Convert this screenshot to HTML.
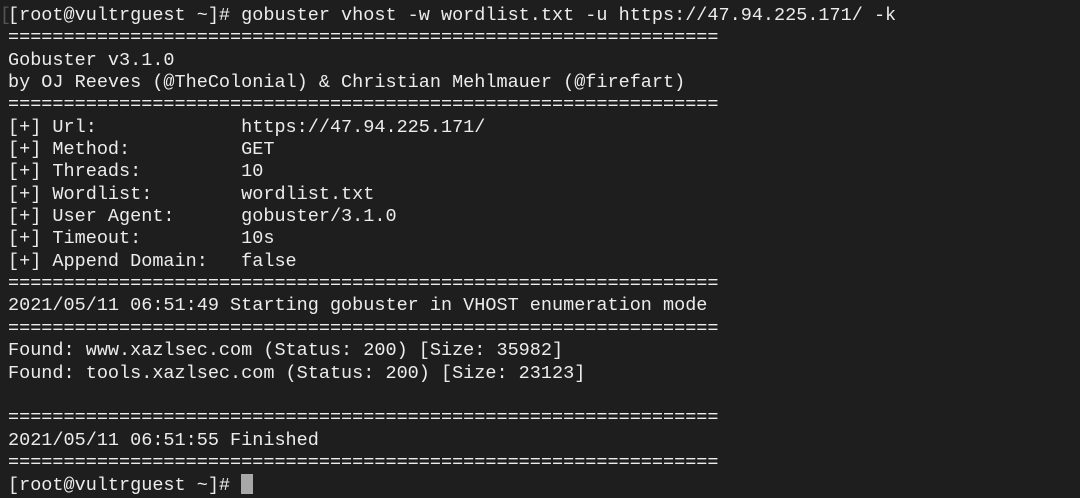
<!DOCTYPE html>
<html><head><meta charset="utf-8"><style>
html,body{margin:0;padding:0;background:#1e1e1e;width:1080px;height:498px;overflow:hidden}
pre{position:absolute;left:8px;top:5px;margin:0;font-family:"Liberation Mono","DejaVu Sans Mono",monospace;font-size:18.5px;line-height:22.35px;color:#ececec;letter-spacing:0}
.f{position:absolute;left:0;top:5px;font-family:"Liberation Mono",monospace;font-size:18.4px;line-height:22.4px;color:#555}
.cur{display:inline-block;width:12px;height:20px;background:#a8a8a8;vertical-align:-4px}
</style></head><body>
<div class="f">[</div>
<pre>[root@vultrguest ~]# gobuster vhost -w wordlist.txt -u https://47.94.225.171/ -k
================================================================
Gobuster v3.1.0
by OJ Reeves (@TheColonial) &amp; Christian Mehlmauer (@firefart)
================================================================
[+] Url:             https://47.94.225.171/
[+] Method:          GET
[+] Threads:         10
[+] Wordlist:        wordlist.txt
[+] User Agent:      gobuster/3.1.0
[+] Timeout:         10s
[+] Append Domain:   false
================================================================
2021/05/11 06:51:49 Starting gobuster in VHOST enumeration mode
================================================================
Found: www.xazlsec.com (Status: 200) [Size: 35982]
Found: tools.xazlsec.com (Status: 200) [Size: 23123]

================================================================
2021/05/11 06:51:55 Finished
================================================================
[root@vultrguest ~]# <span class="cur"></span></pre>
</body></html>
